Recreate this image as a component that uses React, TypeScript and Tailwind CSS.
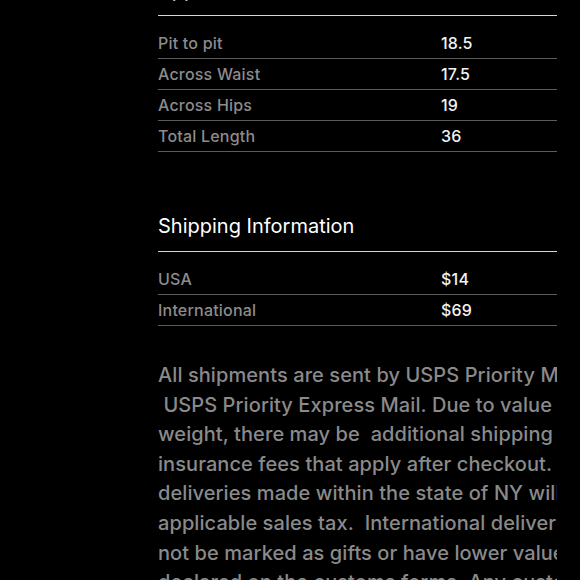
const measurements = [
  { label: "Pit to pit", value: "18.5" },
  { label: "Across Waist", value: "17.5" },
  { label: "Across Hips", value: "19" },
  { label: "Total Length", value: "36" },
];

const shipping = [
  { label: "USA", value: "$14" },
  { label: "International", value: "$69" },
];

const policy = [
  "All shipments are sent by USPS Priority Mail or",
  "\u00a0USPS Priority Express Mail. Due to value and",
  "weight, there may be\u00a0 additional shipping and",
  "insurance fees that apply after checkout. All",
  "deliveries made within the state of NY will incur",
  "applicable sales tax.\u00a0 International deliveries will",
  "not be marked as gifts or have lower values",
  "declared on the customs forms. Any customs",
];

function Section({ title, rows }: { title: string; rows: { label: string; value: string }[] }) {
  return (
    <div>
      <h2 className="text-[20px] leading-[24px] text-white pb-[13px] border-b border-[#d6d6d6]">{title}</h2>
      <div className="mt-[12px]">
        {rows.map((r) => (
          <div key={r.label} className="flex items-center h-[31px] border-b border-[#5c5c5c] text-[16px] tracking-[0.2px]">
            <span className="w-[283px] font-medium text-[#8c8c8c]">{r.label}</span>
            <span className="font-medium text-[#f2f2f2]">{r.value}</span>
          </div>
        ))}
      </div>
    </div>
  );
}

export default function App() {
  return (
    <div
      className="w-[580px] h-[580px] bg-black overflow-hidden"
      style={{ fontFamily: "Inter, 'Noto Sans', sans-serif" }}
    >
      <div className="ml-[158px] w-[399px] -mt-[22px] overflow-hidden">
        <Section title="Approximate Measurements" rows={measurements} />
        <div className="mt-[62px]">
          <Section title="Shipping Information" rows={shipping} />
        </div>
        <div className="mt-[35px] text-[20px] leading-[29.6px] font-medium tracking-[0.08px] text-[#8a8a8a]">
          {policy.map((l, i) => (
            <div key={i} className="whitespace-nowrap">
              {l}
            </div>
          ))}
        </div>
      </div>
    </div>
  );
}
